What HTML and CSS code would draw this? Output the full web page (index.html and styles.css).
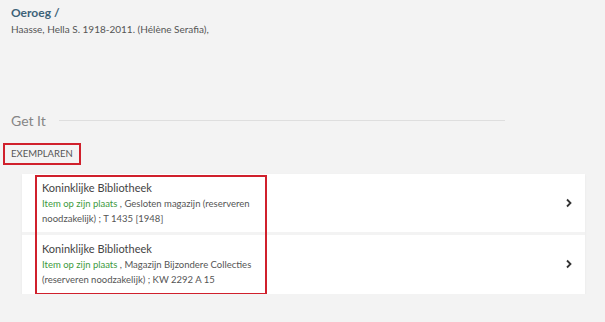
FILE: index.html
```html
<!DOCTYPE html>
<html lang="nl">
<head>
  <meta charset="UTF-8" />
  <title>Oeroeg - Get It</title>
  <link rel="stylesheet" href="styles.css">
</head>
<body>
  <div class="record">
    <h1 class="title">Oeroeg /</h1>
    <p class="author">Haasse, Hella S. 1918-2011. (Hélène Serafia),</p>
  </div>

  <section class="get-it">
    <div class="section-head">
      <h2>Get It</h2>
      <span class="rule"></span>
    </div>

    <div class="tab-label">EXEMPLAREN</div>

    <div class="card">
      <div class="highlight-box"></div>

      <div class="holding">
        <div class="holding-text">
          <div class="library">Koninklijke Bibliotheek</div>
          <div class="details"><span class="status">Item op zijn plaats</span> , Gesloten magazijn (reserveren<br>noodzakelijk) ; T 1435 [1948]</div>
        </div>
        <svg class="chevron" width="8" height="10" viewBox="0 0 8 10"><path d="M2 1.5 L5.5 5 L2 8.5" fill="none" stroke="#333" stroke-width="1.8"/></svg>
      </div>

      <div class="holding">
        <div class="holding-text">
          <div class="library">Koninklijke Bibliotheek</div>
          <div class="details"><span class="status">Item op zijn plaats</span> , Magazijn Bijzondere Collecties<br>(reserveren noodzakelijk) ; KW 2292 A 15</div>
        </div>
        <svg class="chevron" width="8" height="10" viewBox="0 0 8 10"><path d="M2 1.5 L5.5 5 L2 8.5" fill="none" stroke="#333" stroke-width="1.8"/></svg>
      </div>
    </div>
  </section>
</body>
</html>
```

FILE: styles.css
```css
body {
  margin: 0;
  background-color: #f3f3f3;
  font-family: Lato, 'Open Sans', sans-serif;
  color: #444;
}

.record {
  padding: 5px 11px 0;
}

.title {
  margin: 0;
  font-size: 12px;
  line-height: 16px;
  font-weight: bold;
  color: #3d6278;
}

.author {
  margin: 0;
  font-size: 10px;
  line-height: 16px;
  color: #555;
}

.get-it {
  margin-top: 72px;
}

.section-head {
  display: flex;
  align-items: center;
  padding: 0 100px 0 11px;
  height: 22px;
}

.section-head h2 {
  margin: 0;
  font-size: 14px;
  font-weight: normal;
  color: #858585;
}

.rule {
  flex: 1;
  margin-left: 13px;
  border-top: 1px solid #dedede;
}

.tab-label {
  width: fit-content;
  margin: 12px 0 0 3px;
  padding: 0 6px;
  height: 18px;
  line-height: 18px;
  font-size: 9.5px;
  color: #555;
  border: 2px solid #d0202c;
}

.card {
  position: relative;
  margin: 9px 20px 0 22px;
  background-color: #f3f3f3;
  box-shadow: 0 1px 2px rgba(0, 0, 0, 0.06);
}

.holding {
  display: flex;
  align-items: center;
  justify-content: space-between;
  background-color: #fff;
  padding: 6px 12px 6px 20px;
}

.holding + .holding {
  margin-top: 3px;
  padding-bottom: 7px;
}

.library {
  font-size: 11px;
  line-height: 16px;
  color: #444;
}

.details {
  font-size: 9.5px;
  line-height: 15px;
  color: #555;
}

.status {
  color: #3d9a3d;
}

.highlight-box {
  position: absolute;
  left: 13px;
  top: 1px;
  width: 228px;
  height: 116px;
  border: 2px solid #d0202c;
  pointer-events: none;
}
```
